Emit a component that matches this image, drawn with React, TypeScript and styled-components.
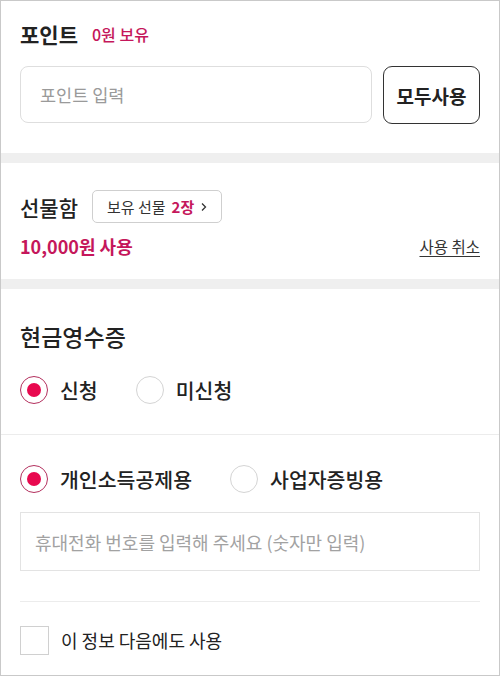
import React from "react";
import styled, { createGlobalStyle } from "styled-components";

const Global = createGlobalStyle`
  html, body { margin: 0; padding: 0; background: #fff; }
  body { font-family: "Noto Sans CJK KR", "Noto Sans", sans-serif; color: #222; }
  * { box-sizing: border-box; }
`;

const PINK = "#c5175b";

const Frame = styled.div`
  width: 500px;
  height: 676px;
  border: 1px solid #c9c9c9;
  overflow: hidden;
  display: flex;
  flex-direction: column;
`;

const Section = styled.section<{ $pt: number; $pb: number }>`
  padding: ${(p) => p.$pt}px 19px ${(p) => p.$pb}px 19px;
  display: flex;
  flex-direction: column;
`;

const Band = styled.div`
  height: 10px;
  background: #efefef;
  flex: none;
`;

const TitleRow = styled.div`
  display: flex;
  align-items: center;
  gap: 14px;
`;

const Title = styled.h2<{ $size?: number; $lh?: number; $weight?: number }>`
  margin: 0;
  font-size: ${(p) => p.$size ?? 21}px;
  font-weight: ${(p) => p.$weight ?? 500};
  line-height: ${(p) => p.$lh ?? 28}px;
  color: #222;
`;

const Balance = styled.span`
  font-size: 16px;
  font-weight: 500;
  color: ${PINK};
`;

const InputRow = styled.div`
  display: flex;
  gap: 11px;
  margin-top: 18px;
`;

const PointInput = styled.input`
  flex: 1;
  height: 57px;
  border: 1px solid #dedede;
  border-radius: 8px;
  padding: 0 19px;
  font-family: inherit;
  font-size: 17.5px;
  outline: none;
  &::placeholder { color: #9a9a9a; }
`;

const AllButton = styled.button`
  width: 97px;
  height: 58px;
  border: 1.5px solid #333;
  border-radius: 9px;
  background: #fff;
  font-family: inherit;
  font-size: 19px;
  font-weight: 700;
  color: #222;
  padding: 0;
`;

const Chip = styled.button`
  height: 33px;
  padding: 0 13px 0 14px;
  border: 1px solid #cfcfcf;
  border-radius: 5px;
  background: #fff;
  font-family: inherit;
  font-size: 15px;
  color: #333;
  display: flex;
  align-items: center;
  gap: 6px;
`;

const ChipStrong = styled.b`
  color: ${PINK};
  font-weight: 700;
`;

const UsedRow = styled.div`
  display: flex;
  justify-content: space-between;
  align-items: center;
  height: 26px;
  margin-top: 10px;
`;

const UsedAmount = styled.span`
  font-size: 18px;
  font-weight: 700;
  color: ${PINK};
`;

const CancelLink = styled.a`
  font-size: 15.5px;
  color: #333;
  text-decoration: underline;
  text-underline-offset: 3px;
`;

const RadioRow = styled.div<{ $mt: number }>`
  display: flex;
  align-items: center;
  gap: 38px;
  margin-top: ${(p) => p.$mt}px;
`;

const RadioLabel = styled.label`
  display: flex;
  align-items: center;
  gap: 12px;
  height: 28px;
  font-size: 20.5px;
  font-weight: 500;
  line-height: 28px;
  color: #222;
`;

const RadioCircle = styled.span<{ $on: boolean }>`
  width: 28px;
  height: 28px;
  border-radius: 50%;
  border: 1.5px solid ${(p) => (p.$on ? "#b3305e" : "#d4d4d4")};
  display: flex;
  align-items: center;
  justify-content: center;
  flex: none;
  &::after {
    content: "";
    width: 14px;
    height: 14px;
    border-radius: 50%;
    background: ${(p) => (p.$on ? "#e8094f" : "transparent")};
  }
`;

const FullDivider = styled.div`
  height: 1px;
  background: #ececec;
  margin: 30px -19px 0;
`;

const PhoneInput = styled.input`
  margin-top: 19px;
  height: 59px;
  border: 1px solid #e3e3e3;
  padding: 0 14px;
  font-family: inherit;
  font-size: 18px;
  outline: none;
  &::placeholder { color: #a2a2a2; }
`;

const Divider = styled.div`
  height: 1px;
  background: #ececec;
  margin-top: 30px;
`;

const CheckLabel = styled.label`
  display: flex;
  align-items: center;
  gap: 12px;
  margin-top: 24px;
  font-size: 18px;
  line-height: 29px;
  color: #222;
`;

const CheckBox = styled.span`
  width: 29px;
  height: 29px;
  border: 1px solid #d0d0d0;
  flex: none;
`;

function Radio({ on, label }: { on: boolean; label: string }) {
  return (
    <RadioLabel>
      <RadioCircle $on={on} />
      {label}
    </RadioLabel>
  );
}

export default function App() {
  return (
    <>
      <Global />
      <Frame>
        <Section $pt={19} $pb={29}>
          <TitleRow>
            <Title $weight={700}>포인트</Title>
            <Balance>0원 보유</Balance>
          </TitleRow>
          <InputRow>
            <PointInput placeholder="포인트 입력" />
            <AllButton>모두사용</AllButton>
          </InputRow>
        </Section>
        <Band />
        <Section $pt={27} $pb={20}>
          <TitleRow>
            <Title>선물함</Title>
            <Chip>
              보유 선물 <ChipStrong>2장</ChipStrong>
              <svg width="8" height="10" viewBox="0 0 8 10">
                <path d="M2 1.5 L5.5 5 L2 8.5" fill="none" stroke="#333" strokeWidth="1.3" />
              </svg>
            </Chip>
          </TitleRow>
          <UsedRow>
            <UsedAmount>10,000원 사용</UsedAmount>
            <CancelLink>사용 취소</CancelLink>
          </UsedRow>
        </Section>
        <Band />
        <Section $pt={32} $pb={0}>
          <TitleRow>
            <Title $size={23} $lh={30}>현금영수증</Title>
          </TitleRow>
          <RadioRow $mt={25}>
            <Radio on label="신청" />
            <Radio on={false} label="미신청" />
          </RadioRow>
          <FullDivider />
          <RadioRow $mt={30}>
            <Radio on label="개인소득공제용" />
            <Radio on={false} label="사업자증빙용" />
          </RadioRow>
          <PhoneInput placeholder="휴대전화 번호를 입력해 주세요 (숫자만 입력)" />
          <Divider />
          <CheckLabel>
            <CheckBox />
            이 정보 다음에도 사용
          </CheckLabel>
        </Section>
      </Frame>
    </>
  );
}
